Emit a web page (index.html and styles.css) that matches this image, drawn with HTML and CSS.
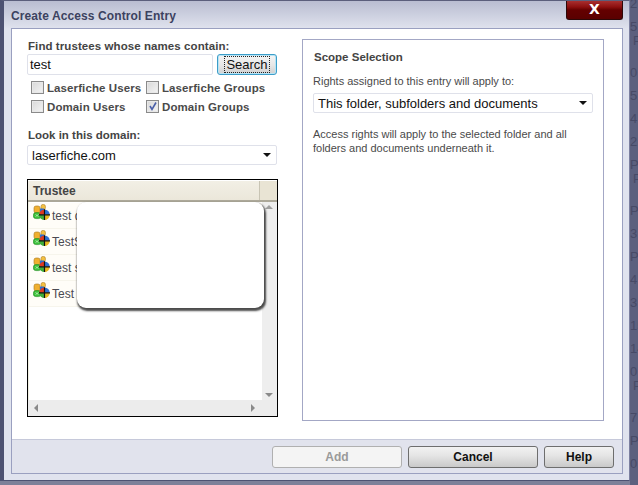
FILE: index.html
```html
<!DOCTYPE html>
<html lang="en">
<head>
<meta charset="utf-8">
<title>Create Access Control Entry</title>
<link rel="stylesheet" href="styles.css">
</head>
<body>
<svg class="defs" width="0" height="0" aria-hidden="true">
  <defs>
    <symbol id="group" viewBox="0 0 17 16">
      <rect x="1" y="2" width="6" height="7" rx="2" fill="#f0b030" stroke="#a87820" stroke-width=".6"/>
      <rect x="8" y="0.4" width="4.4" height="5.4" rx="2" fill="#f4c040" stroke="#a87820" stroke-width=".6"/>
      <rect x="7" y="4.5" width="4" height="4" fill="#2f6fd0"/>
      <rect x="0.4" y="8.6" width="7.6" height="6" rx="2.4" fill="#3cc03c" stroke="#1f8a1f" stroke-width=".6"/>
      <path d="M2.5 10.5l3 2M5.5 10.5l-3 2" stroke="#c8f0c0" stroke-width=".7"/>
      <path d="M11.5 5.500a5.300 5.300 0 0 0-5.300 5.300h5.300z" fill="#e03a20"/>
      <path d="M11.5 5.500a5.300 5.300 0 0 1 5.300 5.300h-5.300z" fill="#2f6fd0"/>
      <path d="M6.200 10.800a5.300 5.300 0 0 0 5.300 5.200v-5.200z" fill="#3fae3a"/>
      <path d="M16.800 10.800a5.300 5.300 0 0 1-5.300 5.200v-5.200z" fill="#e8b820"/>
      <path d="M11.500 5.300v10.900M6 10.800h11" stroke="#111" stroke-width="1.200"/>
    </symbol>
  </defs>
</svg>
<div class="backdrop-text" aria-hidden="true">
  <span>2</span><span>5</span><span class="p">P</span><span>0</span><span>51</span><span>4</span><span>21</span><span>P</span><span class="p">P</span><span>P</span><span>3</span><span>P</span><span>4</span><span>3</span><span>15</span><span>14</span><span>0</span><span class="p">P</span><span>7</span><span>P</span><span>0</span>
</div>
<main class="dialog">
  <header class="titlebar">
    <h1 class="title">Create Access Control Entry</h1>
    <button class="close" type="button">X</button>
  </header>
  <div class="inner">
    <div class="content">
      <section class="left">
        <label class="label">Find trustees whose names contain:</label>
        <div class="search-row">
          <div class="textbox">test</div>
          <button class="search" type="button"><span class="focus">Search</span></button>
        </div>
        <div class="checks">
          <div class="check"><span class="box"></span>Laserfiche Users</div>
          <div class="check"><span class="box"></span>Laserfiche Groups</div>
          <div class="check"><span class="box"></span>Domain Users</div>
          <div class="check"><span class="box"><svg viewBox="0 0 13 13" width="13" height="13"><path d="M4 6l2 3.500L10 2.500" fill="none" stroke="#4a5fa8" stroke-width="1.600"/></svg></span>Domain Groups</div>
        </div>
        <label class="label domain-label">Look in this domain:</label>
        <div class="select domain"><span>laserfiche.com</span><i class="arrow"></i></div>
        <div class="list">
          <div class="list-head"><div class="col-name">Trustee</div><div class="col-rest"></div></div>
          <div class="list-main">
            <div class="rows">
              <div class="row"><svg class="ico" width="17" height="16"><use href="#group"/></svg>test d</div>
              <div class="row"><svg class="ico" width="17" height="16"><use href="#group"/></svg>TestS</div>
              <div class="row"><svg class="ico" width="17" height="16"><use href="#group"/></svg>test s</div>
              <div class="row"><svg class="ico" width="17" height="16"><use href="#group"/></svg>Test V</div>
            </div>
            <div class="vscroll"><i class="up"></i><i class="down"></i></div>
          </div>
          <div class="hscroll"><i class="lt"></i><i class="rt"></i></div>
          <div class="popup"></div>
        </div>
      </section>
      <section class="scope">
        <h2 class="scope-title">Scope Selection</h2>
        <p class="scope-text">Rights assigned to this entry will apply to:</p>
        <div class="select scope-select"><span>This folder, subfolders and documents</span><i class="arrow"></i></div>
        <p class="scope-note">Access rights will apply to the selected folder and all folders and documents underneath it.</p>
      </section>
    </div>
    <footer class="footer">
      <button class="btn add" type="button" disabled>Add</button>
      <button class="btn cancel" type="button">Cancel</button>
      <button class="btn help" type="button">Help</button>
    </footer>
  </div>
</main>
</body>
</html>
```
FILE: styles.css
```css
* { box-sizing: border-box; }
html, body { margin: 0; padding: 0; }
body {
  width: 638px;
  height: 485px;
  overflow: hidden;
  position: relative;
  background: #5c607e;
  font-family: "Liberation Sans", Arial, sans-serif;
}
.defs { position: absolute; }
.backdrop-text {
  position: absolute;
  left: 630px;
  top: -8px;
  width: 8px;
  height: 489px;
  overflow: hidden;
  display: flex;
  flex-direction: column;
  font-size: 13px;
  line-height: 23px;
  color: #474a66;
}
.backdrop-text .p { transform: translate(3px, -9px); }
.dialog {
  position: absolute;
  left: 0;
  top: 0;
  width: 630px;
  height: 481px;
  padding: 0 6px 6px 7px;
  background: linear-gradient(#b9bdd1, #e0e3ee 28px);
  border-left: 4px solid #4d5272;
  border-right: 1px solid #7c80a0;
  border-bottom: 1px solid #4d5272;
  border-top: 1px solid #5b5f7c;
  display: flex;
  flex-direction: column;
  box-shadow: 0 4px 0 #7d8099;
}
.titlebar {
  height: 27px;
  flex: none;
  display: flex;
  justify-content: space-between;
}
.title {
  margin: 0;
  padding-top: 8px;
  font-size: 12px;
  line-height: 14px;
  font-weight: bold;
  color: #3c4260;
  letter-spacing: 0.100px;
}
.close {
  width: 57px;
  height: 19px;
  margin: 0;
  padding: 0 0 1px;
  border: 1px solid #2c0808;
  border-top: 0;
  border-radius: 0 0 3px 3px;
  background: linear-gradient(#a83030 0, #8c0f0f 6px, #640000 9px, #5a0000);
  color: #fff;
  font: bold 14px/15px "DejaVu Sans", sans-serif;
}
.inner {
  flex: 1;
  min-height: 0;
  border: 1px solid #9aa0c0;
  background: #fff;
  display: flex;
  flex-direction: column;
}
.content {
  flex: 1;
  min-height: 0;
  display: flex;
  padding: 10px 18px 0 15px;
  gap: 25px;
}
.left { width: 250px; flex: none; display: flex; flex-direction: column; }
.label {
  padding-left: 1px;
  font-size: 11.500px;
  line-height: 14px;
  font-weight: bold;
  color: #444;
  letter-spacing: 0.080px;
}
.search-row { display: flex; gap: 4px; margin-top: 1px; }
.textbox {
  width: 186px;
  height: 21px;
  padding-left: 2px;
  border: 1px solid #dfe1ea;
  border-radius: 2px;
  font-size: 13px;
  line-height: 19px;
  color: #111;
}
.search {
  width: 60px;
  height: 21px;
  padding: 0;
  border: 1px solid #3c9dc9;
  border-radius: 3px;
  background: linear-gradient(#f5f5f5, #e6e6e6 55%, #cfcfcf);
  font-size: 13px;
  color: #111;
  box-shadow: inset 0 0 0 1px #b8e4f5;
  font-family: inherit;
}
.focus { outline: 1px dotted #222; padding: 0 1px; }
.checks {
  display: grid;
  grid-template-columns: 115px 1fr;
  grid-auto-rows: 19px;
  margin: 3px 0 0 4px;
  height: 38px;
}
.check {
  display: flex;
  align-items: center;
  gap: 3px;
  font-size: 11.500px;
  font-weight: bold;
  color: #4a4a4a;
  letter-spacing: 0.100px;
  white-space: nowrap;
}
.box {
  width: 13px;
  height: 13px;
  flex: none;
  border: 1px solid #8a8a8a;
  background: linear-gradient(135deg, #d8d8d8, #f4f4f4);
  box-shadow: inset 0 0 0 1px #e8e8e8;
  position: relative;
}
.box svg { position: absolute; left: -1px; top: -1px; }
.domain-label { margin-top: 12px; letter-spacing: 0; }
.select {
  display: flex;
  align-items: center;
  justify-content: space-between;
  border: 1px solid #dfe1ea;
  border-radius: 2px;
  height: 20px;
  font-size: 13px;
  color: #111;
  padding: 0 5px 0 4px;
}
.domain { margin-top: 3px; }
.arrow {
  width: 0;
  height: 0;
  border: 4px solid transparent;
  border-top: 4px solid #111;
  border-bottom: 0;
}
.list {
  position: relative;
  margin-top: 14px;
  width: 251px;
  height: 238px;
  border: 1px solid #000;
  display: flex;
  flex-direction: column;
}
.list-head {
  height: 21px;
  flex: none;
  display: flex;
  border-bottom: 2px solid #aca899;
  margin-top: 1px;
  background: #e9e4d4;
}
.col-name {
  width: 232px;
  padding: 3px 0 0 5px;
  font-size: 12px;
  line-height: 14px;
  font-weight: bold;
  color: #444;
  background: linear-gradient(#f2efe5, #ebe7da);
  border-right: 1px solid #c8c4b4;
}
.col-rest { flex: 1; }
.list-main { flex: 1; min-height: 0; display: flex; }
.rows { flex: 1; border-left: 1px solid #f0efdf; padding-top: 1px; }
.row {
  height: 26px;
  display: flex;
  align-items: center;
  gap: 2px;
  padding-left: 4px;
  font-size: 12px;
  color: #4a4a52;
  border-bottom: 1px solid #f7f5ec;
  background: #fffdf8;
}
.ico { flex: none; margin-top: -8px; }
.vscroll {
  width: 15px;
  background: #eeeeee;
  position: relative;
}
.up, .down, .lt, .rt { position: absolute; width: 0; height: 0; border: 4px solid transparent; }
.up { left: 3px; top: 3px; border-top: 0; border-bottom: 4px solid #a0a0a0; }
.down { left: 3px; bottom: 3px; border-bottom: 0; border-top: 4px solid #8a8a8a; }
.hscroll {
  height: 16px;
  flex: none;
  background: #ececec;
  position: relative;
}
.lt { left: 6px; top: 4px; border-left: 0; border-right: 4px solid #8a8a8a; }
.rt { right: 22px; top: 4px; border-right: 0; border-left: 4px solid #8a8a8a; }
.popup {
  position: absolute;
  left: 49px;
  top: 22px;
  width: 187px;
  height: 106px;
  background: #fff;
  border-radius: 9px;
  box-shadow: 1px 2px 2px 1px rgba(0, 0, 0, 0.700);
}
.scope {
  width: 302px;
  flex: none;
  height: 382px;
  border: 1px solid #a3a7c5;
  padding: 10px 10px 0;
  color: #444;
}
.scope-title {
  margin: 0;
  padding-left: 1px;
  font-size: 11.500px;
  line-height: 14px;
  font-weight: bold;
  color: #444;
}
.scope-text {
  margin: 10px 0 0;
  font-size: 11px;
  line-height: 14px;
  color: #4a4a4a;
}
.scope-select { margin-top: 5px; }
.scope-note {
  margin: 14px 0 0;
  font-size: 11px;
  line-height: 14px;
  color: #4a4a4a;
}
.footer {
  height: 34px;
  flex: none;
  background: #e1e3ed;
  border-top: 1px solid #c6c9da;
  display: flex;
  justify-content: flex-end;
  gap: 6px;
  padding: 6px 8px 0 0;
}
.btn {
  height: 22px;
  padding: 0;
  border: 1px solid #6e6e6e;
  border-radius: 3px;
  background: linear-gradient(#f2f2f2, #e4e4e4 45%, #c9c9c9);
  font: bold 12px/14px "Liberation Sans", Arial, sans-serif;
  color: #111;
}
.add {
  width: 130px;
  border-color: #b0b0b0;
  background: #f4f4f4;
  color: #9a9a9a;
}
.cancel { width: 130px; }
.help { width: 70px; }
```
